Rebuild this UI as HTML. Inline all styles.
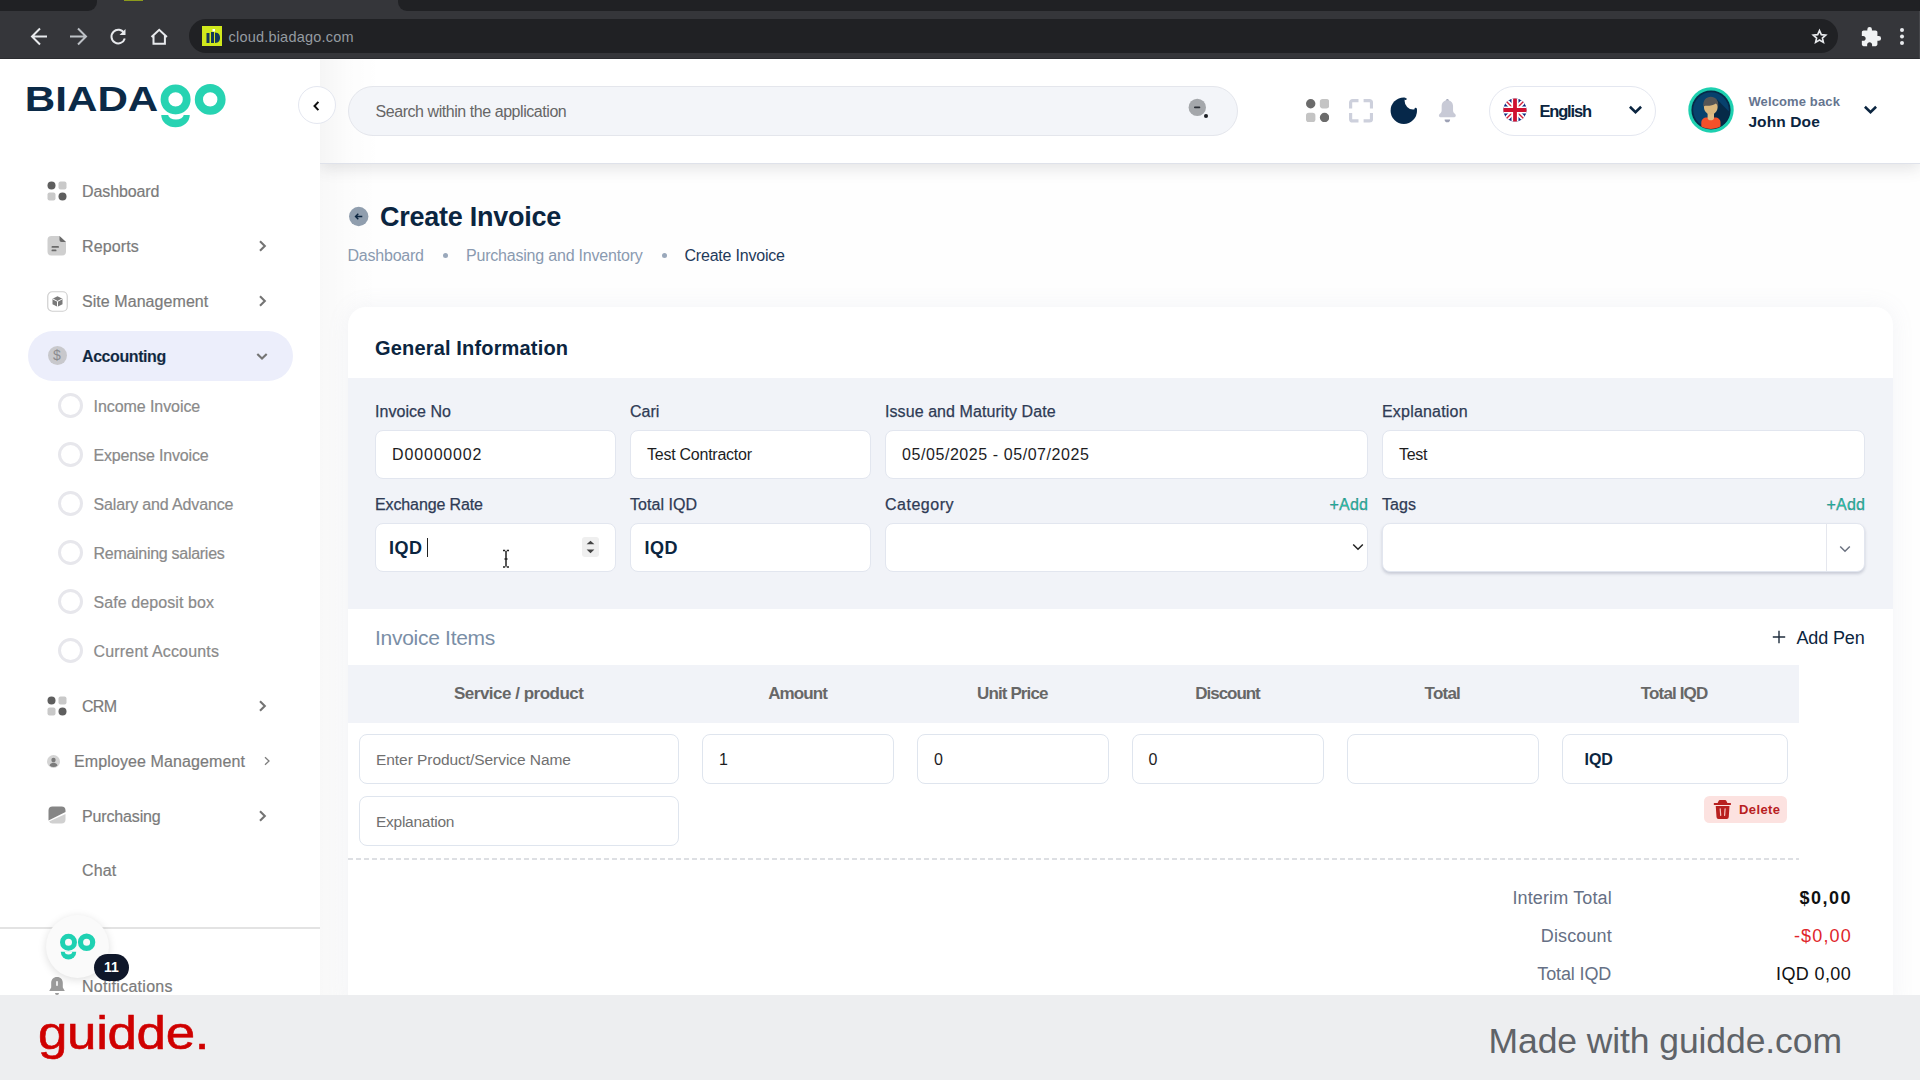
<!DOCTYPE html>
<html lang="en">
<head>
<meta charset="utf-8">
<title>Create Invoice</title>
<style>
*{box-sizing:border-box;margin:0;padding:0}
html,body{width:1920px;height:1080px;overflow:hidden;background:#fff;font-family:"Liberation Sans",sans-serif;color:#0b2540}
.abs{position:absolute}
#chrome{position:absolute;left:0;top:0;width:1920px;height:58.600px;background:#35363a;border-bottom:1px solid #2b2c30;border-right:1px solid #45464a;z-index:5}
#tabstrip{position:absolute;left:0;top:0;width:1920px;height:10.500px;background:#35363a}
.tsd{position:absolute;top:0;height:10.500px;background:#202124}

#urlbar{position:absolute;left:189px;top:19px;width:1649px;height:34px;border-radius:17px;background:#202124}
#url{position:absolute;left:228.500px;top:28.500px;font-size:14.500px;color:#959ba1;line-height:16px;white-space:nowrap}
#sidebar{position:absolute;left:0;top:58px;width:320px;height:937px;background:#fff}
#main{position:absolute;left:320px;top:58px;width:1600px;height:937px;background:linear-gradient(90deg,rgba(0,0,0,.025),rgba(0,0,0,.008) 28px,rgba(0,0,0,0) 60px),#fefefe}
#header{position:absolute;left:320px;top:58px;width:1600px;height:106px;background:linear-gradient(90deg,rgba(0,0,0,.04),rgba(0,0,0,.01) 28px,rgba(0,0,0,0) 60px),#fff;box-shadow:0 5px 14px rgba(60,60,70,.13);border-bottom:1px solid #dfe2ea;clip-path:inset(0 0 -40px 0)}
#footer{position:absolute;left:0;top:995px;width:1920px;height:85px;background:#edeef0}
.nav{position:absolute;left:82px;margin-top:1px;font-size:16px;color:#7b7b7b;-webkit-text-stroke:.2px #7b7b7b;line-height:20px;white-space:nowrap}
.sub{position:absolute;left:93.500px;margin-top:1.500px;font-size:16px;color:#8a8a8a;-webkit-text-stroke:.2px #8a8a8a;line-height:20px;white-space:nowrap}
.ring{position:absolute;left:58.200px;margin-top:.25px;width:25px;height:25px;border-radius:50%;border:3px solid #e7e7ec;background:#fff}
.chev{position:absolute;left:256px;width:12px;height:12px}
.lbl{position:absolute;font-size:16px;color:#2f3b55;-webkit-text-stroke:.25px #2f3b55;line-height:20px;white-space:nowrap}
.inp{position:absolute;height:49px;background:#fff;border:1px solid #e2e6ef;border-radius:8px;font-size:16px;line-height:48px;padding-left:16px;color:#1d1d1f;white-space:nowrap}
.th{position:absolute;top:684px;font-size:17px;font-weight:bold;color:#676767;line-height:20px;white-space:nowrap;transform:translateX(-50%)}
.cell{position:absolute;top:734.300px;height:49.500px;background:#fff;border:1px solid #dfe5ee;border-radius:8px;font-size:16px;line-height:50.300px;padding-left:16px;color:#1d1d1f;white-space:nowrap}
.tl{position:absolute;font-size:18px;color:#667085;line-height:22px;white-space:nowrap}
.tv{position:absolute;font-size:18px;line-height:22px;white-space:nowrap}
</style>
</head>
<body>
<div id="chrome">
  <div id="tabstrip"></div><div class="tsd" style="left:0;width:97px;border-radius:0 0 9px 0"></div><div class="tsd" style="left:398px;width:1522px;border-radius:0 0 0 9px"></div>
  <div class="abs" style="left:124px;top:0;width:19px;height:1px;background:#8c9a1c"></div>
  <svg class="abs" style="left:0;top:0" width="240" height="58" viewBox="0 0 240 58" fill="none" stroke="#e8eaed" stroke-width="2" stroke-linecap="butt" stroke-linejoin="miter">
    <path d="M47 36.5H32.5M40 28.5l-8 8 8 8"/>
    <path d="M70 36.5h14.5M78 28.5l8 8-8 8" stroke="#bdc1c6"/>
    <path d="M124.2 33.2A6.8 6.8 0 1 0 124.8 38.5" />
    <path d="M125.5 29v6h-6z" fill="#e8eaed" stroke="none"/>
    <path d="M151.5 37l7.7-7.2 7.7 7.2M153.5 35.5v8.3h11.4v-8.3" />
  </svg>
  <div id="urlbar"></div>
  <div class="abs" style="left:202px;top:26px;width:20px;height:20px;background:#d0e81c"></div>
  <svg class="abs" style="left:202px;top:26px" width="20" height="20" viewBox="0 0 20 20"><rect x="4.5" y="7" width="3" height="10" fill="#12365a"/><rect x="9" y="6" width="3" height="11" fill="#12365a"/><path d="M13 6.5c4 0 5 3 5 5.300s-1 5.200-5 5.200z" fill="#12365a"/><rect x="10.500" y="3" width="2.500" height="2.500" fill="#fff"/></svg>
  <div id="url" style="letter-spacing:0.204px">cloud.biadago.com</div>
  <svg class="abs" style="left:1809.500px;top:27.300px" width="19" height="19" viewBox="0 0 22 22" fill="none" stroke="#e8eaed" stroke-width="1.900" stroke-linejoin="miter"><path d="M11 4.200l2.100 4.700 5.100.5-3.850 3.400 1.150 5-4.500-2.700-4.500 2.700 1.150-5L3.800 9.400l5.100-.5z"/></svg>
  <svg class="abs" style="left:1860px;top:26px" width="22" height="22" viewBox="0 0 24 24" fill="#f1f3f4"><path d="M20.500 11H19V7c0-1.100-.9-2-2-2h-4V3.500a2.500 2.500 0 0 0-5 0V5H4c-1.100 0-2 .9-2 2v3.800h1.500c1.500 0 2.700 1.200 2.700 2.700S5 16.200 3.500 16.200H2V20c0 1.100.9 2 2 2h3.800v-1.500c0-1.500 1.200-2.700 2.700-2.700s2.700 1.200 2.700 2.700V22H17c1.100 0 2-.9 2-2v-4h1.500a2.500 2.500 0 0 0 0-5z"/></svg>
  <div class="abs" style="left:1900px;top:28px;width:4px;height:4px;border-radius:50%;background:#e8eaed;box-shadow:0 6.500px 0 #e8eaed,0 13px 0 #e8eaed"></div>
</div>
<div id="sidebar">
  <!-- logo -->
  <svg class="abs" style="left:20px;top:20px" width="220" height="60" viewBox="20 78 220 60">
    <text x="24.800" y="111.200" font-family="Liberation Sans, sans-serif" font-weight="bold" font-size="34.5" fill="#0b2a47" textLength="133.500" lengthAdjust="spacingAndGlyphs">BIADA</text>
    <circle cx="175.600" cy="99.400" r="11.100" fill="none" stroke="#27d3b2" stroke-width="7.800"/>
    <circle cx="210.200" cy="99.400" r="11.300" fill="none" stroke="#27d3b2" stroke-width="8.200"/>
    <path d="M161.250 115h28.500a14.250 12.250 0 0 1-28.500 0z" fill="#27d3b2"/>
    <path d="M168.100 114.800h15.650a7.830 5 0 0 1-15.650 0z" fill="#fff"/>
  </svg>
  <!-- nav icons -->
  <svg class="abs" style="left:47px;top:123px" width="20" height="20" viewBox="0 0 20 20"><circle cx="4.500" cy="4.500" r="4" fill="#5e5e5e"/><rect x="11.500" y=".5" width="8" height="8" rx="2" fill="#c9c9c9"/><rect x=".5" y="11.500" width="8" height="8" rx="2" fill="#c9c9c9"/><circle cx="15.500" cy="15.500" r="4" fill="#5e5e5e"/></svg>
  <div class="nav" style="top:123px;letter-spacing:-0.098px">Dashboard</div>

  <svg class="abs" style="left:47px;top:177px" width="20" height="22" viewBox="0 0 20 22"><path d="M4.500 1h8l6.500 6v9.500a4 4 0 0 1-4 4h-10.500a4 4 0 0 1-4-4v-11.500a4 4 0 0 1 4-4z" fill="#cfcfcf"/><path d="M12.500 1l6.500 6h-4.500a2 2 0 0 1-2-2z" fill="#6a6a6a"/><rect x="4.500" y="11" width="7.500" height="1.800" rx=".9" fill="#6a6a6a"/><rect x="4.500" y="14.500" width="5" height="1.800" rx=".9" fill="#6a6a6a"/></svg>
  <div class="nav" style="top:178px;letter-spacing:0.120px">Reports</div>
  <svg class="chev" style="top:182px" viewBox="0 0 12 12"><path d="M4 1.300l4.800 4.700-4.800 4.700" fill="none" stroke="#747474" stroke-width="2.100"/></svg>

  <svg class="abs" style="left:47px;top:232.500px" width="21" height="21" viewBox="0 0 21 21"><rect x=".75" y=".75" width="19.500" height="19.500" rx="4.500" fill="#fff" stroke="#cfcfcf" stroke-width="1.200"/><path d="M10.500 5.200l5 2.600v5.400l-5 2.600-5-2.600V7.800z" fill="#7a7a7a"/><path d="M5.500 7.800l5 2.600 5-2.600M10.500 10.400v5.400" stroke="#fff" stroke-width="1" fill="none"/></svg>
  <div class="nav" style="top:233px;letter-spacing:0.060px">Site Management</div>
  <svg class="chev" style="top:237px" viewBox="0 0 12 12"><path d="M4 1.300l4.800 4.700-4.800 4.700" fill="none" stroke="#747474" stroke-width="2.100"/></svg>

  <div class="abs" style="left:27.500px;top:272.500px;width:265px;height:50.500px;border-radius:25px;background:#eceefb"></div>
  <div class="abs" style="left:47.500px;top:288px;width:19px;height:19px;border-radius:50%;background:#c8c8cc;color:#8b8b90;font-size:14px;line-height:19px;text-align:center">$</div>
  <div class="nav" style="top:288px;font-weight:bold;color:#0b2540;letter-spacing:-0.417px">Accounting</div>
  <svg class="chev" style="top:292px" viewBox="0 0 12 12"><path d="M1.300 4l4.700 4.600L10.700 4" fill="none" stroke="#747474" stroke-width="2.100"/></svg>

  <div class="ring" style="top:335px"></div><div class="sub" style="top:337px;letter-spacing:-0.066px">Income Invoice</div>
  <div class="ring" style="top:384px"></div><div class="sub" style="top:386px;letter-spacing:-0.154px">Expense Invoice</div>
  <div class="ring" style="top:433px"></div><div class="sub" style="top:435px;letter-spacing:-0.137px">Salary and Advance</div>
  <div class="ring" style="top:482px"></div><div class="sub" style="top:484px;letter-spacing:-0.283px">Remaining salaries</div>
  <div class="ring" style="top:531px"></div><div class="sub" style="top:533px;letter-spacing:0.086px">Safe deposit box</div>
  <div class="ring" style="top:580px"></div><div class="sub" style="top:582px;letter-spacing:0.184px">Current Accounts</div>

  <svg class="abs" style="left:47px;top:637.500px" width="20" height="20" viewBox="0 0 20 20"><circle cx="4.500" cy="4.500" r="4" fill="#5e5e5e"/><rect x="11.500" y=".5" width="8" height="8" rx="2" fill="#c9c9c9"/><rect x=".5" y="11.500" width="8" height="8" rx="2" fill="#c9c9c9"/><circle cx="15.500" cy="15.500" r="4" fill="#5e5e5e"/></svg>
  <div class="nav" style="top:637.500px;letter-spacing:-0.719px">CRM</div>
  <svg class="chev" style="top:641.500px" viewBox="0 0 12 12"><path d="M4 1.300l4.800 4.700-4.800 4.700" fill="none" stroke="#747474" stroke-width="2.100"/></svg>

  <svg class="abs" style="left:47px;top:696.500px" width="13" height="13" viewBox="0 0 13 13"><circle cx="6.500" cy="6.500" r="6.500" fill="#d4d4d4"/><circle cx="6.500" cy="5" r="2.200" fill="#7a7a7a"/><path d="M2.500 10.500c.6-2 2-2.800 4-2.800s3.400.8 4 2.800a6 6 0 0 1-8 0z" fill="#7a7a7a"/></svg>
  <div class="nav" style="top:692.500px;left:74px;letter-spacing:0.112px">Employee Management</div>
  <svg class="abs" style="left:263px;top:697.500px" width="8" height="10" viewBox="0 0 8 10"><path d="M2 1.200l4 3.800-4 3.800" fill="none" stroke="#7d7d7d" stroke-width="1.300"/></svg>

  <svg class="abs" style="left:48px;top:747.500px" width="18" height="18" viewBox="0 0 18 18"><path d="M4.500.5h9a4 4 0 0 1 4 4v1.500l-17 8.500v-10a4 4 0 0 1 4-4z" fill="#858585"/><path d="M17.500 8v5.500a4 4 0 0 1-4 4h-9a4 4 0 0 1-3.500-2z" fill="#d0d0d0"/></svg>
  <div class="nav" style="top:747.500px;letter-spacing:-0.144px">Purchasing</div>
  <svg class="chev" style="top:751.500px" viewBox="0 0 12 12"><path d="M4 1.300l4.800 4.700-4.800 4.700" fill="none" stroke="#747474" stroke-width="2.100"/></svg>

  <div class="nav" style="top:802px;letter-spacing:0.151px">Chat</div>

  <div class="abs" style="left:0;top:869px;width:320px;height:2px;background:#e3e3e3"></div>
  <svg class="abs" style="left:48px;top:918px" width="18" height="20" viewBox="0 0 18 20"><path d="M9 1c3.600 0 5.800 2.600 5.800 6v4.500l2 3.500H1.200l2-3.500V7c0-3.400 2.200-6 5.800-6z" fill="#9a9a9a"/><rect x="8.200" y="5" width="1.600" height="5" rx=".8" fill="#fff"/><path d="M7 17h4a2 2 0 0 1-4 0z" fill="#9a9a9a"/></svg>
  <div class="nav" style="top:918.200px;letter-spacing:0.279px">Notifications</div>
  <div class="abs" style="left:46px;top:857px;width:63px;height:63px;border-radius:50%;background:#fafafa;box-shadow:0 2px 8px rgba(0,0,0,.13)"></div>
  <svg class="abs" style="left:56px;top:872px" width="44" height="34" viewBox="0 0 44 34"><circle cx="12.500" cy="12.250" r="6" fill="none" stroke="#1fd1b2" stroke-width="5"/><circle cx="30.600" cy="12.250" r="6.100" fill="none" stroke="#1fd1b2" stroke-width="5.200"/><path d="M4.750 21.750h15.500a7.750 7.750 0 0 1-15.500 0z" fill="#1fd1b2"/><path d="M8.700 21.500h7.600a3.800 3 0 0 1-7.600 0z" fill="#fafafa"/></svg>
  <div class="abs" style="left:94px;top:895.500px;width:35px;height:27.500px;border-radius:14px;background:#0f172a;color:#fff;font-weight:bold;font-size:14px;line-height:27.500px;text-align:center">11</div>
</div>

<div id="main"></div>
<div id="header">
  <div class="abs" style="left:27.500px;top:27.800px;width:890px;height:50px;border-radius:25px;background:#f3f5f9;border:1px solid #e4e6ec"></div>
  <div class="abs" style="left:55.500px;top:44px;font-size:16px;line-height:20px;color:#666;white-space:nowrap;letter-spacing:-0.444px">Search within the application</div>
  <svg class="abs" style="left:866px;top:38px" width="24" height="24" viewBox="0 0 24 24"><circle cx="11.300" cy="11.400" r="8.700" fill="#a4a7ab"/><rect x="8" y="10.600" width="6.300" height="1.700" rx=".8" fill="#2b2f36"/><circle cx="20" cy="20" r="2.050" fill="#1c1f25"/></svg>
  <!-- icons -->
  <svg class="abs" style="left:985.500px;top:41px" width="23.250" height="23.250" viewBox="0 0 23.250 23.250"><circle cx="4.700" cy="4.700" r="4.700" fill="#6b6b6b"/><rect x="13.850" y="0" width="9.400" height="9.400" rx="2.800" fill="#c4c4c4"/><rect x="0" y="13.850" width="9.400" height="9.400" rx="2.800" fill="#c4c4c4"/><circle cx="18.550" cy="18.550" r="4.700" fill="#6b6b6b"/></svg>
  <svg class="abs" style="left:1028.700px;top:41px" width="24.100" height="23.500" viewBox="0 0 24.100 23.500" fill="none" stroke="#cdd0dc" stroke-width="3.200"><path d="M1.600 9.500V3.600a2 2 0 0 1 2-2h5.900M14.600 1.600h5.900a2 2 0 0 1 2 2v5.900M22.500 14v5.900a2 2 0 0 1-2 2h-5.900M9.500 21.900H3.600a2 2 0 0 1-2-2V14"/></svg>
  <svg class="abs" style="left:1070px;top:38px" width="28" height="28" viewBox="0 0 28 28"><defs><mask id="mn"><rect width="28" height="28" fill="#000"/><circle cx="13.800" cy="14.700" r="13.200" fill="#fff"/><circle cx="23.200" cy="4.800" r="8.600" fill="#000"/></mask></defs><rect width="28" height="28" fill="#06284a" mask="url(#mn)"/><circle cx="15.600" cy="3" r="1.100" fill="#06284a"/><circle cx="25.600" cy="12.900" r="1.100" fill="#06284a"/></svg>
  <svg class="abs" style="left:1117px;top:39px" width="21" height="27" viewBox="0 0 21 27"><circle cx="10.350" cy="3.400" r="1.500" fill="#9da1b5"/><path d="M7.600 22.400h5.500a2.750 2.800 0 0 1-5.500 0z" fill="#9da1b5"/><path d="M10.350 3.300c3.400 0 5.700 2.500 5.700 5.900v4.300c0 1.500.8 2.600 2.100 3.600 1.100.9.800 3.200-.8 3.200H3.350c-1.600 0-1.900-2.300-.8-3.200 1.300-1 2.100-2.100 2.100-3.600V9.200c0-3.400 2.300-5.900 5.700-5.900z" fill="#c8cad6"/></svg>
  <!-- language -->
  <div class="abs" style="left:1168.700px;top:27.500px;width:167.500px;height:50px;border-radius:25px;background:#fff;border:1px solid #e4e7f0"></div>
  <svg class="abs" style="left:1182.700px;top:40.300px" width="24" height="24" viewBox="0 0 24 24"><defs><clipPath id="fc"><circle cx="12" cy="12" r="11.600"/></clipPath></defs><g clip-path="url(#fc)"><rect width="24" height="24" fill="#0f2a80"/><path d="M0 0l24 24M24 0L0 24" stroke="#fff" stroke-width="5"/><path d="M0 0l24 24M24 0L0 24" stroke="#d6213a" stroke-width="1.400"/><path d="M12 0v24M0 12h24" stroke="#fff" stroke-width="7"/><path d="M12 0v24M0 12h24" stroke="#cf1030" stroke-width="3.800"/></g></svg>
  <div class="abs" style="left:1219.500px;top:42.500px;font-size:16.500px;font-weight:bold;line-height:20px;color:#0b2540;letter-spacing:-1.182px">English</div>
  <svg class="abs" style="left:1307.500px;top:47.300px" width="15" height="11" viewBox="0 0 15 11"><path d="M1.900 1.800l5.600 5.300 5.600-5.300" fill="none" stroke="#0b2540" stroke-width="2.600"/></svg>
  <!-- user -->
  <svg class="abs" style="left:1367.100px;top:28.400px" width="48" height="48" viewBox="0 0 48 48"><defs><clipPath id="av"><circle cx="24" cy="24" r="19.600"/></clipPath></defs><circle cx="24" cy="24" r="22.700" fill="#1ed0b0"/><circle cx="24" cy="24" r="19.600" fill="#062a48"/><circle cx="24" cy="24" r="17.800" fill="#07416d"/><g clip-path="url(#av)" transform="translate(-.2 -.7)"><path d="M30 14l18 18v16H24l-6-9z" fill="#062a48"/><path d="M14.500 48v-10.500c0-3.200 2.200-5.200 5.500-5.200h8.200c3.300 0 5.500 2 5.500 5.200V48z" fill="#f4502a"/><path d="M20.800 27h6.400v5.600c0 1.400-1.500 2.400-3.200 2.400s-3.200-1-3.200-2.400z" fill="#e0bd86"/><path d="M17.200 19c0-4 3-6.500 6.800-6.500s6.800 2.500 6.800 6.500v3c0 4-3 7.200-6.800 7.200s-6.800-3.200-6.800-7.200z" fill="#dab77e"/><path d="M16.600 21.500c-.8-6.500 2.800-10.100 7.400-10.100s8.200 3.600 7.400 10.100c-.6-1.600-1.300-2.500-2.300-3.300-2.400 1.600-7.300 2.700-10.700 2.200-.9.300-1.500.7-1.800 1.100z" fill="#555"/></g></svg>
  <div class="abs" style="left:1428.400px;top:34.600px;font-size:13px;line-height:18px;color:#66758f;font-weight:bold;white-space:nowrap;letter-spacing:0.128px">Welcome back</div>
  <div class="abs" style="left:1428.400px;top:54.300px;font-size:15.500px;line-height:20px;color:#0b2540;font-weight:bold;white-space:nowrap;letter-spacing:0.111px">John Doe</div>
  <svg class="abs" style="left:1542.500px;top:47.300px" width="15" height="11" viewBox="0 0 15 11"><path d="M1.900 1.800l5.600 5.300 5.600-5.300" fill="none" stroke="#0b2540" stroke-width="2.600"/></svg>
</div>
<div class="abs" style="left:297.500px;top:86.400px;width:38px;height:38px;border-radius:50%;background:#fff;border:1px solid #e4e7f0"></div>
<svg class="abs" style="left:310px;top:99.500px" width="12" height="12" viewBox="0 0 12 12"><path d="M8.400 1.900L4.500 6l3.900 4.100" fill="none" stroke="#111" stroke-width="2"/></svg>

<div id="content">
  <!-- title -->
  <svg class="abs" style="left:348px;top:205px" width="22" height="22" viewBox="0 0 22 22"><circle cx="10.700" cy="11.500" r="9.700" fill="#909eae"/><path d="M14.300 11.500h-6.800M10.300 8.700L7.500 11.500l2.800 2.800" fill="none" stroke="#0b2540" stroke-width="1.400"/></svg>
  <div class="abs" style="left:380px;top:200px;font-size:27px;font-weight:bold;line-height:34px;color:#0b2540;white-space:nowrap;letter-spacing:-0.257px">Create Invoice</div>
  <div class="abs" style="left:347.500px;top:246px;font-size:16px;line-height:20px;color:#8a9ab0;white-space:nowrap;letter-spacing:-0.223px">Dashboard</div>
  <div class="abs" style="left:443px;top:252.500px;width:5px;height:5px;border-radius:50%;background:#9aa8bb"></div>
  <div class="abs" style="left:466px;top:246px;font-size:16px;line-height:20px;color:#8a9ab0;white-space:nowrap;letter-spacing:-0.204px">Purchasing and Inventory</div>
  <div class="abs" style="left:661.500px;top:252.500px;width:5px;height:5px;border-radius:50%;background:#9aa8bb"></div>
  <div class="abs" style="left:684.500px;top:246px;font-size:16px;line-height:20px;color:#1f3a5a;white-space:nowrap;letter-spacing:-0.206px">Create Invoice</div>

  <!-- card -->
  <div class="abs" style="left:348px;top:307px;width:1545px;height:700px;background:#fff;border-radius:18px 18px 0 0;box-shadow:0 0 22px rgba(140,150,175,.10)"></div>
  <div class="abs" style="left:348px;top:378px;width:1545px;height:231px;background:#f1f3f8"></div>
  <div class="abs" style="left:375px;top:336px;font-size:20px;font-weight:bold;line-height:24px;color:#0b2540;white-space:nowrap;letter-spacing:0.165px">General Information</div>

  <div class="lbl" style="left:375px;top:401.700px;letter-spacing:0.045px">Invoice No</div>
  <div class="lbl" style="left:630px;top:401.700px;letter-spacing:-0.015px">Cari</div>
  <div class="lbl" style="left:885px;top:401.700px;letter-spacing:0.074px">Issue and Maturity Date</div>
  <div class="lbl" style="left:1382px;top:401.700px;letter-spacing:0.197px">Explanation</div>
  <div class="inp" style="left:375px;top:429.500px;width:241px"><span style="letter-spacing:0.844px">D00000002</span></div>
  <div class="inp" style="left:630px;top:429.500px;width:241px"><span style="letter-spacing:-0.249px">Test Contractor</span></div>
  <div class="inp" style="left:885px;top:429.500px;width:483px"><span style="letter-spacing:0.569px">05/05/2025 - 05/07/2025</span></div>
  <div class="inp" style="left:1382px;top:429.500px;width:483px"><span style="letter-spacing:-0.315px">Test</span></div>

  <div class="lbl" style="left:375px;top:495.100px;letter-spacing:-0.117px">Exchange Rate</div>
  <div class="lbl" style="left:630px;top:495.100px;letter-spacing:0.039px">Total IQD</div>
  <div class="lbl" style="left:885px;top:495.100px;letter-spacing:0.511px">Category</div>
  <div class="lbl" style="left:1329.500px;top:495.100px;color:#1fc8a9;letter-spacing:0.196px">+Add</div>
  <div class="lbl" style="left:1382px;top:495.100px;letter-spacing:0.068px">Tags</div>
  <div class="lbl" style="left:1826.500px;top:495.100px;color:#1fc8a9;letter-spacing:0.196px">+Add</div>
  <div class="inp" style="left:375px;top:522.500px;width:241px;padding-left:13px;font-weight:bold;font-size:18px;color:#0b2540"><span style="letter-spacing:0.492px">IQD</span></div>
  <div class="abs" style="left:426.500px;top:538px;width:1.500px;height:19px;background:#222"></div>
  <div class="abs" style="left:582px;top:537px;width:17px;height:20px;border-radius:3px;background:#efefef"></div>
  <svg class="abs" style="left:582px;top:537px" width="17" height="20" viewBox="0 0 17 20"><path d="M4.600 7.300l3.900-3.600 3.900 3.600zM4.600 12.600l3.900 3.600 3.900-3.600z" fill="#444"/></svg>
  <svg class="abs" style="left:500px;top:549px" width="12" height="20" viewBox="0 0 12 20"><path d="M3 1.500h2.200M6.800 1.500H9M6 2v15.500M3 18h2.200M6.800 18H9M4.500 10h3" fill="none" stroke="#222" stroke-width="1.500"/></svg>
  <div class="inp" style="left:630px;top:522.500px;width:241px;padding-left:13.500px;font-weight:bold;font-size:18px;color:#0b2540"><span style="letter-spacing:0.492px">IQD</span></div>
  <div class="inp" style="left:885px;top:522.500px;width:483px"></div>
  <svg class="abs" style="left:1352px;top:542px" width="12" height="10" viewBox="0 0 12 10"><path d="M1.200 2.500L6 7.300l4.800-4.800" fill="none" stroke="#222" stroke-width="1.500"/></svg>
  <div class="inp" style="left:1382px;top:522.500px;width:483px;box-shadow:0 2px 3px rgba(60,70,100,.22)"></div>
  <div class="abs" style="left:1826px;top:523px;width:1px;height:48px;background:#e5e7ee"></div>
  <svg class="abs" style="left:1839px;top:544px" width="12" height="10" viewBox="0 0 12 10"><path d="M1.200 2.500L6 7.300l4.800-4.800" fill="none" stroke="#6b7280" stroke-width="1.500"/></svg>

  <!-- invoice items -->
  <div class="abs" style="left:375px;top:625.500px;font-size:21px;line-height:24px;color:#7a8ea6;white-space:nowrap;letter-spacing:-0.285px">Invoice Items</div>
  <svg class="abs" style="left:1772px;top:630px" width="14" height="14" viewBox="0 0 14 14"><path d="M7 .8v12.400M.8 7h12.400" stroke="#1f2d3d" stroke-width="1.400"/></svg>
  <div class="abs" style="left:1796.400px;top:626.500px;font-size:18px;line-height:22px;color:#0b2540;white-space:nowrap;letter-spacing:-0.127px">Add Pen</div>
  <div class="abs" style="left:348px;top:665px;width:1451px;height:57.500px;background:#f1f3f8"></div>
  <div class="th" style="left:518.750px;letter-spacing:-0.496px">Service / product</div>
  <div class="th" style="left:797.600px;letter-spacing:-0.904px">Amount</div>
  <div class="th" style="left:1012.300px;letter-spacing:-0.873px">Unit Price</div>
  <div class="th" style="left:1227.500px;letter-spacing:-1.048px">Discount</div>
  <div class="th" style="left:1442.300px;letter-spacing:-0.790px">Total</div>
  <div class="th" style="left:1674.100px;letter-spacing:-0.862px">Total IQD</div>

  <div class="cell" style="left:359px;width:320px;color:#707070;font-size:15.500px"><span style="letter-spacing:-0.057px">Enter Product/Service Name</span></div>
  <div class="cell" style="left:702px;width:192px">1</div>
  <div class="cell" style="left:917px;width:192px">0</div>
  <div class="cell" style="left:1131.500px;width:192px">0</div>
  <div class="cell" style="left:1346.500px;width:192px"></div>
  <div class="cell" style="left:1561.500px;width:226px;padding-left:22px;font-weight:bold;font-size:16px;color:#0b2540"><span style="letter-spacing:-0.027px">IQD</span></div>
  <div class="cell" style="left:359px;top:796.200px;width:320px;color:#707070;font-size:15.500px"><span style="letter-spacing:-0.262px">Explanation</span></div>
  <div class="abs" style="left:1704.200px;top:796px;width:83px;height:27px;border-radius:5.500px;background:#fce2e0"></div>
  <svg class="abs" style="left:1713px;top:799px" width="19" height="21" viewBox="0 0 19 21"><path d="M4.500 4.200l1.200-2.400a1.400 1.400 0 0 1 1.200-.8h5.200a1.400 1.400 0 0 1 1.200.8l1.200 2.400z" fill="#b8201f"/><rect x=".75" y="4.100" width="17.250" height="1.800" rx=".6" fill="#b8201f"/><path d="M2.750 6.900h13.750l-.75 11.200a2 2 0 0 1-2 1.900H5.500a2 2 0 0 1-2-1.900z" fill="#b8201f"/><path d="M7.200 9.800l.5 6.600M12.100 9.800l-.5 6.600" stroke="#f6c9c5" stroke-width="1.200" stroke-linecap="round"/></svg>
  <div class="abs" style="left:1739px;top:799.900px;font-size:13px;font-weight:bold;line-height:20px;color:#b8201f;white-space:nowrap;letter-spacing:0.394px">Delete</div>
  <div class="abs" style="left:348px;top:857.500px;width:1451px;height:2px;background:repeating-linear-gradient(90deg,#dddfe3 0,#dddfe3 5px,transparent 5px,transparent 8px)"></div>

  <div class="tl" style="left:1512.400px;top:887px;letter-spacing:0.132px">Interim Total</div><div class="tv" style="left:1799.500px;top:887px;font-weight:bold;color:#111;letter-spacing:1.488px">$0,00</div>
  <div class="tl" style="left:1540.800px;top:925px;letter-spacing:0.124px">Discount</div><div class="tv" style="left:1793.900px;top:925px;color:#e0262b;letter-spacing:1.171px">-$0,00</div>
  <div class="tl" style="left:1537.300px;top:963px;letter-spacing:-0.129px">Total IQD</div><div class="tv" style="left:1776px;top:963px;color:#111;letter-spacing:0.393px">IQD 0,00</div>
</div>

<div id="footer">
  <div class="abs" style="left:37.500px;top:8px;font-size:47px;line-height:60px;color:#cf0000;-webkit-text-stroke:.6px #cf0000;white-space:nowrap;transform:scaleX(1.125);transform-origin:0 0;letter-spacing:-.3px">guidde.</div>
  <div class="abs" style="left:1488.500px;top:25.700px;font-size:35.500px;line-height:40px;color:#5f6368;white-space:nowrap;letter-spacing:-0.090px">Made with guidde.com</div>
</div>

</body>
</html>
